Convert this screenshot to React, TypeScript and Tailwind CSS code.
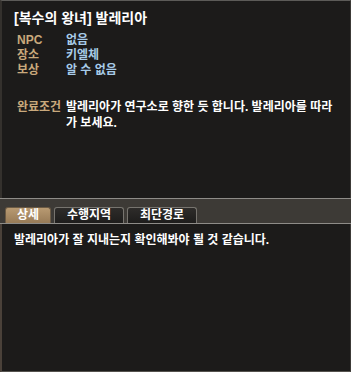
import React from "react";

const font = { fontFamily: '"Liberation Sans", "Noto Sans CJK KR", sans-serif' };

const infoRows = [
  { label: "NPC", value: "없음" },
  { label: "장소", value: "키엘체" },
  { label: "보상", value: "알 수 없음" },
];

const tabs = ["상세", "수행지역", "최단경로"];

export default function App() {
  return (
    <div className="w-[351px] h-[372px] bg-[#1c1b1a] flex flex-col overflow-hidden" style={font}>
      {/* quest summary */}
      <div className="h-[198px] border-t border-t-[#5c5b58] border-l-2 border-l-[#34312d] border-r border-r-[#3c3a37] pl-[12px] pt-[7px]">
        <h1 className="text-[14px] leading-[20px] font-bold text-white">
          [복수의 왕녀] 발레리아
        </h1>
        <div className="mt-[5px] flex flex-col pl-[3px]">
          {infoRows.map((row) => (
            <div key={row.label} className="flex text-[12px] leading-[15px] font-bold">
              <span className="w-[49px] text-[#c9a97c]">{row.label}</span>
              <span className="text-[#a7cbe8]">{row.value}</span>
            </div>
          ))}
        </div>
        <div className="mt-[21px] flex pl-[3px] text-[12px] leading-[16px] font-bold">
          <span className="w-[49px] shrink-0 text-[#c9a97c]">완료조건</span>
          <p className="w-[272px] text-white">
            발레리아가 연구소로 향한 듯 합니다. 발레리아를 따라가 보세요.
          </p>
        </div>
      </div>

      {/* tab strip */}
      <div className="h-[26px] border-y border-[#8e8c88] bg-[#3d3a36] flex items-end gap-[3px] pl-[5px]">
        {tabs.map((tab, i) => (
          <div
            key={tab}
            className={
              i === 0
                ? "w-[46px] h-[16px] rounded-t-[3px] border border-b-0 border-[#6b5a44] bg-gradient-to-b from-[#b89a72] to-[#987b57] text-white text-[12px] leading-[15px] font-bold text-center"
                : "w-[70px] h-[16px] rounded-t-[3px] border border-b-0 border-[#77746f] bg-gradient-to-b from-[#2e2c2a] to-[#1e1d1c] text-white text-[12px] leading-[15px] font-bold text-center"
            }
          >
            {tab}
          </div>
        ))}
      </div>

      {/* description */}
      <div className="flex-1 border-l-2 border-l-[#4a4139] border-r border-r-[#3c3a37] border-b border-b-[#55524e] pl-[12px] pt-[8px]">
        <p className="text-[12px] leading-[16px] font-bold text-white">
          발레리아가 잘 지내는지 확인해봐야 될 것 같습니다.
        </p>
      </div>
    </div>
  );
}
